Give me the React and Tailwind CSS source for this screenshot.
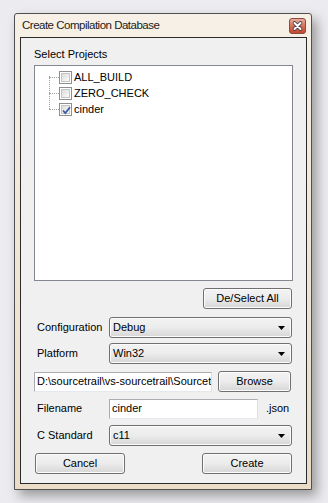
import React from 'react';

const Check = ({ checked }) => (
    <div className="w-[13px] h-[13px] border border-[#8f8f8f] bg-white p-[1px] shrink-0">
        <div className="w-full h-full border border-[#c5c5c5] bg-linear-to-br from-[#dcdcdc] to-[#fbfbfb] relative">
            {checked && (
                <svg className="absolute -left-[1px] -top-[1px]" width="11" height="11" viewBox="0 0 11 11">
                    <path d="M2 5.5 L4.3 8 L9 2.2" fill="none" stroke="#3d5aa6" strokeWidth="1.8" />
                </svg>
            )}
        </div>
    </div>
);

const TreeRow = ({ label, checked }) => (
    <div className="h-[16px] flex items-center">
        <div className="w-[10px] border-t border-dotted border-[#a0a0a0]" />
        <Check checked={checked} />
        <span className="ml-[2px] leading-[13px]">{label}</span>
    </div>
);

const Button = ({ children, className = '' }) => (
    <div className={`h-[21px] rounded-[3px] border border-[#707070] bg-linear-to-b from-[#f3f3f3] via-[#ececec] to-[#d6d6d6] flex items-center justify-center shadow-[inset_0_0_0_1px_#fcfcfc] ${className}`}>
        {children}
    </div>
);

const Combo = ({ value }) => (
    <div className="w-[183px] h-[21px] rounded-[3px] border border-[#707070] bg-linear-to-b from-[#f3f3f3] via-[#ececec] to-[#d6d6d6] flex items-center pl-[3px] pr-[6px] shadow-[inset_0_0_0_1px_#fcfcfc]">
        <span className="flex-1">{value}</span>
        <svg width="7" height="4" viewBox="0 0 7 4">
            <path d="M0 0 H7 L3.5 4 Z" fill="#000" />
        </svg>
    </div>
);

const Field = ({ label, children }) => (
    <div className="flex items-center h-[21px]">
        <span className="w-[75px] pl-[3px]">{label}</span>
        {children}
    </div>
);

export default function App() {
    return (
        <div className="min-h-screen bg-[#ececf0] pt-[13px] pl-[14px] font-['Liberation_Sans',Arial,sans-serif] text-[11px] text-black">
            <div className="w-[298px] h-[477px] border border-[#4f4f4f] rounded-t-[3px] bg-linear-to-b from-[#f6f0e6] to-[#eadcc6] flex flex-col shadow-[5px_6px_12px_rgba(0,0,0,0.35)]">
                {/* title bar */}
                <div className="h-[23px] flex items-center justify-between pl-[7px] pr-[5px]">
                    <span className="text-[11.5px] tracking-[-0.5px] text-[#1c1c1c] pt-[1px]">Create Compilation Database</span>
                    <svg width="17" height="16" viewBox="0 0 17 16">
                        <defs>
                            <linearGradient id="cl" x1="0" y1="0" x2="0" y2="1">
                                <stop offset="0" stopColor="#e9b1a3" />
                                <stop offset="0.5" stopColor="#d5705a" />
                                <stop offset="1" stopColor="#c2452c" />
                            </linearGradient>
                        </defs>
                        <rect x="0.5" y="0.5" width="16" height="15" rx="2.5" fill="url(#cl)" stroke="#8d4b3d" />
                        <path d="M5.5 5 L11.5 11 M11.5 5 L5.5 11" stroke="#3b3b4a" strokeWidth="3.6" strokeLinecap="round" />
                        <path d="M5.5 5 L11.5 11 M11.5 5 L5.5 11" stroke="#fff" strokeWidth="2" strokeLinecap="round" />
                    </svg>
                </div>

                {/* client area */}
                <div className="flex-1 ml-[5px] mr-[4px] mb-[5px] border border-[#2b2b2b] bg-[#f0f0f0] px-[13px] flex flex-col">
                    <div className="mt-[10px] leading-[13px]">Select Projects</div>

                    <div className="mt-[4px] h-[216px] border border-[#828790] bg-white pt-[3px] pl-[14px] relative">
                        <div className="absolute left-[14px] top-[10px] h-[33px] border-l border-dotted border-[#a0a0a0]" />
                        <TreeRow label="ALL_BUILD" />
                        <TreeRow label="ZERO_CHECK" />
                        <TreeRow label="cinder" checked />
                    </div>

                    <div className="mt-[7px] flex justify-end">
                        <Button className="w-[89px] mr-[1px]">De/Select All</Button>
                    </div>

                    <div className="mt-[8px] flex flex-col gap-[5px]">
                        <Field label="Configuration">
                            <Combo value="Debug" />
                        </Field>
                        <Field label="Platform">
                            <Combo value="Win32" />
                        </Field>
                    </div>

                    <div className="mt-[7px] flex items-center justify-between h-[21px]">
                        <div className="w-[178px] h-[20px] border border-[#abadb3] border-r-[#dbdfe6] border-b-[#e3e9ef] bg-white px-[2px] flex items-center overflow-hidden whitespace-nowrap">
                            D:\sourcetrail\vs-sourcetrail\Sourcetrail
                        </div>
                        <Button className="w-[73px] mr-[2px]">Browse</Button>
                    </div>

                    <div className="mt-[6px]">
                        <Field label="Filename">
                            <div className="w-[149px] h-[20px] border border-[#abadb3] border-r-[#dbdfe6] border-b-[#e3e9ef] bg-white px-[2px] flex items-center">
                                cinder
                            </div>
                            <span className="ml-[8px]">.json</span>
                        </Field>
                    </div>

                    <div className="mt-[6px]">
                        <Field label="C Standard">
                            <Combo value="c11" />
                        </Field>
                    </div>

                    <div className="mt-[7px] flex justify-between pl-[1px] pr-[1px]">
                        <Button className="w-[90px]">Cancel</Button>
                        <Button className="w-[90px]">Create</Button>
                    </div>
                </div>
            </div>
        </div>
    );
}
